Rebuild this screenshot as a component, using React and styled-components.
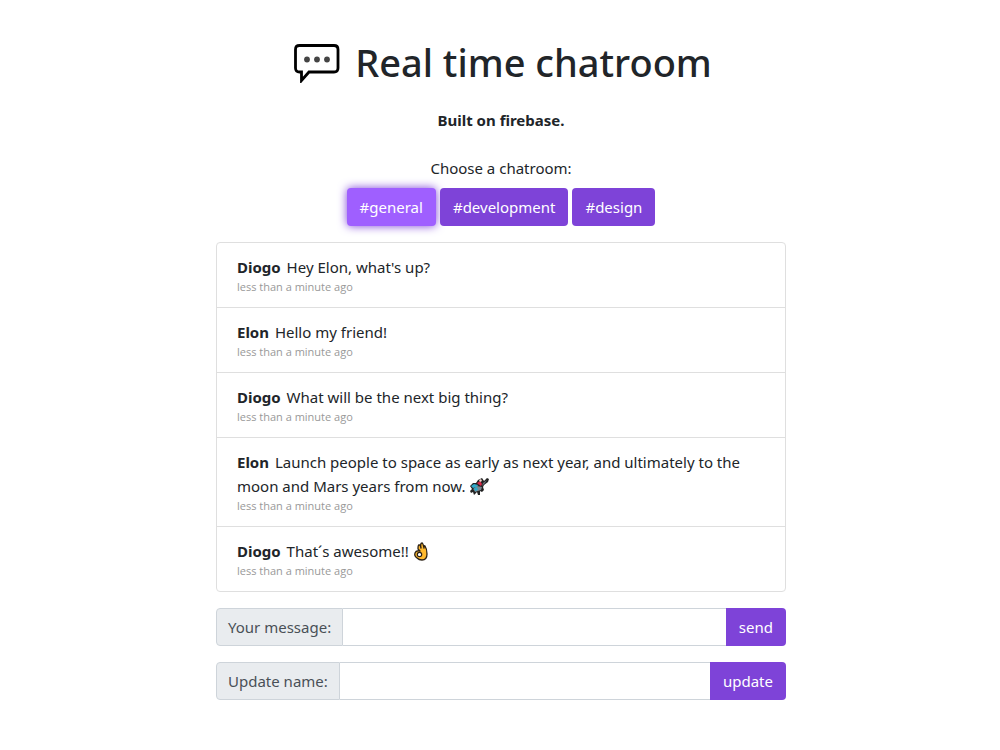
import React, { useState } from "react";
import styled, { createGlobalStyle, css } from "styled-components";

const GlobalStyle = createGlobalStyle`
  *, *::before, *::after { box-sizing: border-box; }
  body {
    margin: 0;
    background: #fff;
    color: #212529;
    font-family: "Segoe UI", "Noto Sans", "Open Sans", sans-serif;
    font-size: 15px;
    line-height: 24px;
  }
`;

const Page = styled.main`
  display: flex;
  flex-direction: column;
  gap: 16px;
  width: 100%;
  max-width: 602px;
  margin: 0 auto;
  padding: 38px 15px 48px 17px;
`;

const Header = styled.header`
  display: flex;
  flex-direction: column;
  align-items: center;
  gap: 22px;
  padding-bottom: 8px;
`;

const Brand = styled.div`
  display: flex;
  align-items: center;
  gap: 14px;
  padding-left: 3px;
`;

const Title = styled.h1`
  margin: 0;
  font-size: 38px;
  line-height: 48px;
  font-weight: 500;
`;

const Tagline = styled.p`
  margin: 0;
  font-weight: 700;
`;

const Rooms = styled.nav`
  display: flex;
  flex-direction: column;
  align-items: center;
  gap: 8px;
`;

const RoomList = styled.div`
  display: flex;
  flex-wrap: wrap;
  justify-content: center;
  gap: 4px;
`;

const Button = styled.button`
  height: 38px;
  padding: 0 13px;
  border: 0;
  border-radius: 4px;
  background: #7e43d8;
  color: #fff;
  font: inherit;
  cursor: pointer;
`;

const RoomButton = styled(Button)`
  ${({ $active }) =>
    $active &&
    css`
      background: #9f5fff;
      box-shadow: 0 0 10px #7e43d8;
    `}
`;

const Messages = styled.ul`
  margin: 0;
  padding: 0;
  list-style: none;
  border: 1px solid #dfdfdf;
  border-radius: 4px;
`;

const Message = styled.li`
  padding: 12px 20px;

  & + & {
    border-top: 1px solid #dfdfdf;
  }
`;

const Author = styled.strong`
  margin-right: 2px;
`;

const Time = styled.time`
  display: block;
  color: #999;
  font-family: "Segoe UI", "Open Sans", sans-serif;
  font-size: 11px;
  line-height: 16px;
`;

const Form = styled.form`
  display: flex;
  height: 38px;
`;

const Label = styled.label`
  padding: 6px 11px;
  border: 1px solid #ced4da;
  border-radius: 4px 0 0 4px;
  background: #e9ecef;
  color: #495057;
  white-space: nowrap;
`;

const Input = styled.input`
  flex: 1;
  min-width: 0;
  padding: 6px 12px;
  border: 1px solid #ced4da;
  border-width: 1px 0;
  background: #fff;
  color: #495057;
  font: inherit;
`;

const Submit = styled(Button)`
  border-radius: 0 4px 4px 0;
`;

const Glyph = styled.svg`
  display: inline-block;
  vertical-align: -5px;
`;

const ChatIcon = () => (
  <svg width="48" height="42" viewBox="0 0 48 42" aria-hidden="true">
    <path
      d="M6.5 4.5H41Q45 4.5 45 8.5V27Q45 31 41 31H16L8.5 39.5V31H6.5Q2.5 31 2.5 27V8.5Q2.5 4.5 6.5 4.5Z"
      fill="#fff"
      stroke="#000"
      strokeWidth="2.8"
    />
    <g fill="#444">
      <circle cx="14" cy="18.5" r="2.9" />
      <circle cx="24" cy="18.5" r="2.9" />
      <circle cx="34" cy="18.5" r="2.9" />
    </g>
  </svg>
);

const HeroEmoji = () => (
  <Glyph width="20" height="20" viewBox="0 0 20 20" role="img" aria-label="flying hero">
    <path d="M1 9L4 6L7 6L9 3L13 1L15 4L18 1L20 2L19 5L15 8L14 10L15 13L13 15L11 14L11 18L9 18L8 15L5 18L4 15L2 16L1 14L3 12Z" fill="#222" />
    <path d="M2 9L5 7L9 8L8 10L4 11Z" fill="#2fa9c9" />
    <path d="M4 12L8 9L13 10L12 13L9 14L6 15L5 13Z" fill="#7b8790" />
    <path d="M5 11L8 10L9 13L6 14Z" fill="#2fa9c9" />
    <path d="M8 6L11 4L13 7L12 9L9 7Z" fill="#d92747" />
    <path d="M10 3L12 2L13 4L11 5Z" fill="#f0d7d0" />
    <path d="M14 6L18 3L16 6L13 9Z" fill="#68747c" />
  </Glyph>
);

const OkEmoji = () => (
  <Glyph width="17" height="20" viewBox="0 0 17 20" role="img" aria-label="OK hand">
    <path
      d="M5 7Q5 3 6 3Q7 2 8 6Q7 1 9 1Q10 1 11 6Q11 3 12 4Q14 7 14 12Q14 18 9 18Q6 18 4 16Q1 14 2 11Q3 8 7 9Z"
      fill="#ffb92e"
      stroke="#2b2116"
      strokeWidth="1.3"
      strokeLinejoin="round"
    />
    <circle cx="6.5" cy="12.5" r="2.2" fill="#fff" stroke="#2b2116" strokeWidth="1.2" />
  </Glyph>
);

const rooms = ["general", "development", "design"];

const messages = [
  { name: "Diogo", body: "Hey Elon, what's up?" },
  { name: "Elon", body: "Hello my friend!" },
  { name: "Diogo", body: "What will be the next big thing?" },
  {
    name: "Elon",
    body: "Launch people to space as early as next year, and ultimately to the moon and Mars years from now.",
    emoji: <HeroEmoji />,
  },
  { name: "Diogo", body: "That´s awesome!!", emoji: <OkEmoji /> },
];

const Field = ({ id, label, action }) => (
  <Form onSubmit={(e) => e.preventDefault()}>
    <Label htmlFor={id}>{label}</Label>
    <Input id={id} type="text" autoComplete="off" />
    <Submit type="submit">{action}</Submit>
  </Form>
);

export default function App() {
  const [room, setRoom] = useState("general");

  return (
    <>
      <GlobalStyle />
      <Page>
        <Header>
          <Brand>
            <ChatIcon />
            <Title>Real time chatroom</Title>
          </Brand>
          <Tagline>Built on firebase.</Tagline>
        </Header>
        <Rooms aria-label="Chatrooms">
          <span>Choose a chatroom:</span>
          <RoomList>
            {rooms.map((name) => (
              <RoomButton
                key={name}
                type="button"
                $active={name === room}
                aria-pressed={name === room}
                onClick={() => setRoom(name)}
              >
                #{name}
              </RoomButton>
            ))}
          </RoomList>
        </Rooms>
        <Messages>
          {messages.map(({ name, body, emoji }, i) => (
            <Message key={i}>
              <Author>{name}</Author> {body} {emoji}
              <Time>less than a minute ago</Time>
            </Message>
          ))}
        </Messages>
        <Field id="message" label="Your message:" action="send" />
        <Field id="name" label="Update name:" action="update" />
      </Page>
    </>
  );
}
